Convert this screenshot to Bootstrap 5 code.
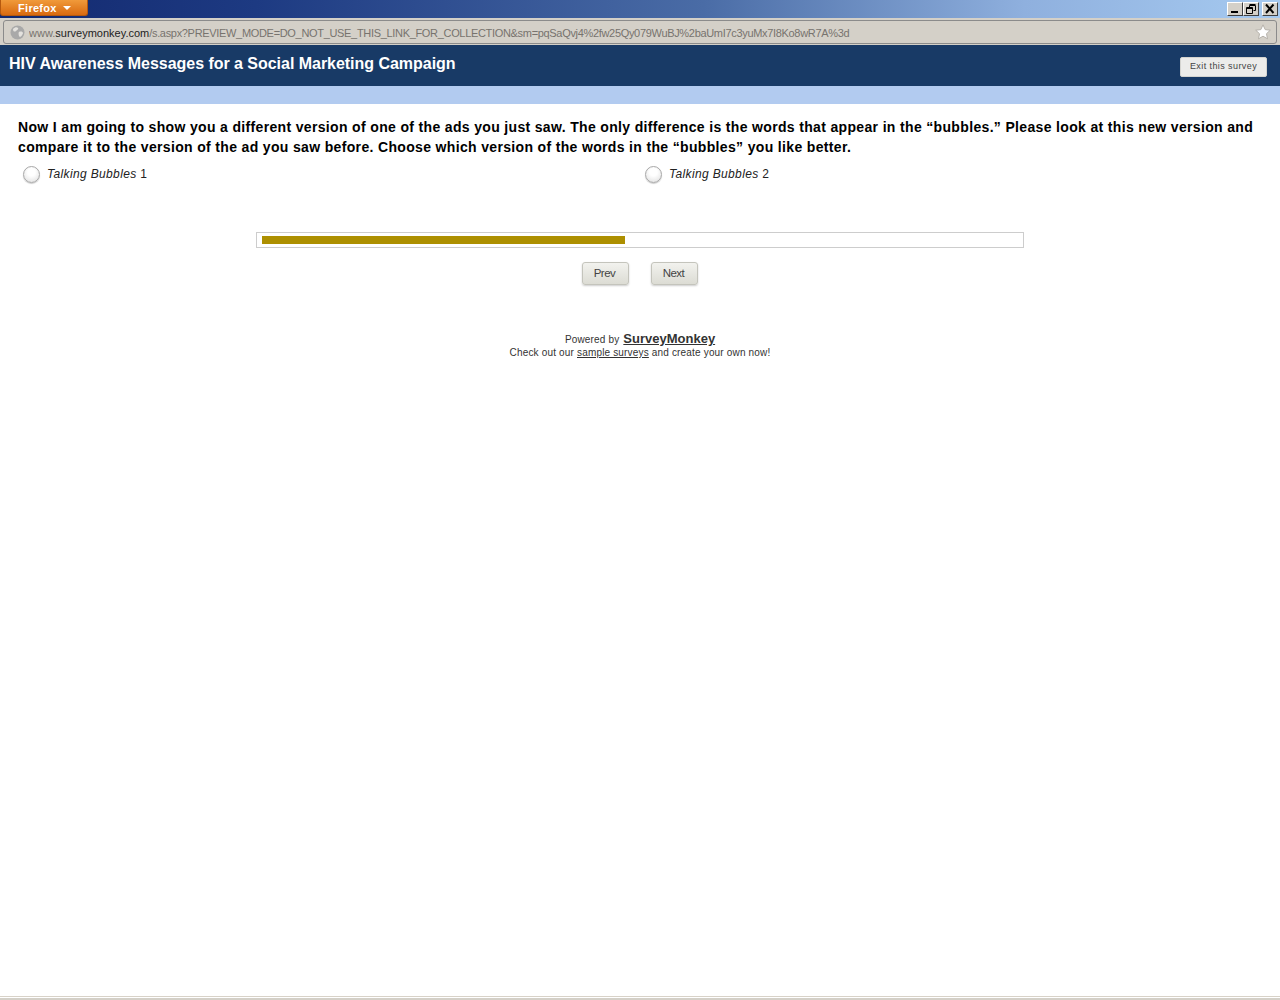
<!DOCTYPE html>
<html lang="en">
<head>
  <meta charset="UTF-8" />
  <title>HIV Awareness Messages for a Social Marketing Campaign</title>
  <meta name="viewport" content="width=device-width, initial-scale=1" />
  <link href="https://cdn.jsdelivr.net/npm/bootstrap@5.3.3/dist/css/bootstrap.min.css" rel="stylesheet" />
  <style>
    html, body { height: 1000px; overflow: hidden; }
    body { font-family: "Liberation Sans", Arial, sans-serif; background: #fff; color: #000; }
    .win-title { height: 18px; background: linear-gradient(90deg, #13296f 0%, #1d3a82 20%, #4a6ca6 55%, #8fb0de 80%, #a6caf0 100%); }
    .ff-btn { width: 88px; height: 16px; background: linear-gradient(#f09a3a, #d96a10); border: 1px solid #b5590f; border-top: 0; border-radius: 0 0 3px 3px; color: #fff; font-size: 11px; font-weight: 700; letter-spacing: .3px; line-height: 16px; padding-left: 17px; gap: 6px; }
    .ff-caret { width: 0; height: 0; border-left: 4px solid transparent; border-right: 4px solid transparent; border-top: 4px solid #fff; }
    .win-btns { gap: 0; padding-top: 2px; padding-right: 2px; }
    .win-btn { width: 16px; height: 14px; background: #d4d0c8; border: 1px solid; border-color: #fff #404040 #404040 #fff; }
    .win-btn svg { display: block; }
    .win-close { margin-left: 3px; }
    .url-wrap { height: 27px; background: #d4d0c8; padding: 2px 3px; }
    .url-box { height: 24px; border: 1px solid #8b8b8b; border-radius: 3px; background: #d4d0c8; font-size: 11px; color: #77736e; padding: 0 5px 0 6px; gap: 4px; }
    .url-box b { font-weight: 400; color: #222; }
    .url-tail { letter-spacing: -.32px; }
    .url-text { flex: 1; white-space: nowrap; overflow: hidden; padding-top: 2px; }
    .survey-head { height: 41px; background: #183a66; padding: 0 13px 0 9px; }
    .survey-title { color: #fff; font-size: 16px; font-weight: 700; margin: 0 0 4px; letter-spacing: -.03px; }
    .exit-btn { font-size: 9px; letter-spacing: 0.42px; color: #444; background: #ececea; border: 1px solid #d4d4d0; border-radius: 2px; width: 87px; height: 20px; line-height: 16px; text-align: center; padding: 0 0 2px; margin-top: 3px; }
    .head-strip { height: 18px; background: #b2cbf0; }
    .q-body { padding: 13px 18px 0; }
    .q-text { font-size: 14px; font-weight: 700; line-height: 20px; letter-spacing: 0.34px; margin: 0 0 7px; }
    .q-opt { font-size: 12px; color: #222; height: 20px; }
    .q-opt label { margin-left: 7px; letter-spacing: .35px; }
    .q-radio { width: 17px; height: 17px; border-radius: 50%; border: 1px solid #a8a8a8; background: radial-gradient(circle at 50% 35%, #fff 30%, #dcdcdc 100%); box-shadow: 0 1px 1px rgba(0,0,0,.2); margin-left: 5px; }
    .q-col { width: 622px; }
    .prog-track { width: 768px; height: 16px; border: 1px solid #cdcdcd; padding: 3px 5px; margin: 48px auto 14px; }
    .prog-fill { height: 8px; background: #ad8f00; }
    .nav-row { gap: 22px; }
    .sm-btn { width: 47px; height: 23px; padding: 0 2px 2px 0; font-size: 11.5px; letter-spacing: -0.5px; line-height: 18px; color: #444; background: linear-gradient(#f2f2ee, #dcdcd4); border: 1px solid #c4c4bc; border-radius: 3px; box-shadow: 0 1px 2px rgba(0,0,0,.2); }
    .powered { margin-top: 47px; text-align: center; font-size: 10px; line-height: 13px; color: #333; letter-spacing: 0.17px; }
    .powered a { color: #333; }
    .sm-link { font-size: 13px; font-weight: 700; letter-spacing: 0; margin-left: 1px; }
    .foot-line { height: 4px; border-top: 1px solid #d8d2c8; background: linear-gradient(#fff 0, #fff 1px, #d4d0c8 1px); }
  </style>
</head>
<body class="d-flex flex-column">
  <div class="win-title d-flex justify-content-between align-items-start">
    <div class="ff-btn d-flex align-items-center">Firefox <span class="ff-caret"></span></div>
    <div class="win-btns d-flex">
      <div class="win-btn"><svg width="14" height="12" viewBox="0 0 14 12"><rect x="3" y="8" width="7" height="2" fill="#000"/></svg></div>
      <div class="win-btn"><svg width="14" height="12" viewBox="0 0 14 12"><path d="M5.500 2.500h6v5h-2M5.500 2.500v2M2.500 4.500h6v6h-6z M2.500 5.500h6 M5.500 1.500h6" fill="none" stroke="#000"/></svg></div>
      <div class="win-btn win-close"><svg width="14" height="12" viewBox="0 0 14 12"><path d="M3 1.500l7.500 8.500M10.500 1.500L3 10" stroke="#000" stroke-width="2" fill="none"/></svg></div>
    </div>
  </div>
  <div class="url-wrap">
    <div class="url-box d-flex align-items-center">
      <svg width="15" height="15" viewBox="0 0 15 15"><circle cx="7.5" cy="7.5" r="7" fill="#a9a9a9"/><path d="M3 4c2-2 4-2 5-1s-1 2-2 3-3 1-3-2zM9 7c2-1 4 0 4 1s-2 4-3 4-2-4-1-5z" fill="#e4e2de"/></svg>
      <div class="url-text">www.<b>surveymonkey.com</b><span class="url-tail">/s.aspx?PREVIEW_MODE=DO_NOT_USE_THIS_LINK_FOR_COLLECTION&amp;sm=pqSaQvj4%2fw25Qy079WuBJ%2baUmI7c3yuMx7I8Ko8wR7A%3d</span></div>
      <svg width="16" height="16" viewBox="0 0 16 16"><path d="M8 .8l2.200 4.800 5.100.6-3.800 3.500 1 5.100L8 12.200l-4.500 2.600 1-5.100L.7 6.200l5.100-.6z" fill="#fff" stroke="#b5b1aa"/></svg>
    </div>
  </div>
  <div class="survey-head d-flex justify-content-between align-items-center">
    <h1 class="survey-title">HIV Awareness Messages for a Social Marketing Campaign</h1>
    <button class="exit-btn" type="button">Exit this survey</button>
  </div>
  <div class="head-strip"></div>
  <main class="flex-grow-1">
    <div class="q-body">
      <p class="q-text">Now I am going to show you a different version of one of the ads you just saw. The only difference is the words that appear in the “bubbles.” Please look at this new version and compare it to the version of the ad you saw before. Choose which version of the words in the “bubbles” you like better.</p>
      <div class="q-opts d-flex">
        <div class="q-col q-opt d-flex align-items-center"><span class="q-radio"></span><label><em>Talking Bubbles</em> 1</label></div>
        <div class="q-col q-opt d-flex align-items-center"><span class="q-radio"></span><label><em>Talking Bubbles</em> 2</label></div>
      </div>
    </div>
    <div class="prog-track"><div class="prog-fill" style="width: 48%"></div></div>
    <div class="nav-row d-flex justify-content-center">
      <button class="sm-btn" type="button">Prev</button>
      <button class="sm-btn" type="button">Next</button>
    </div>
    <div class="powered">
      <div>Powered by <a class="sm-link" href="#">SurveyMonkey</a></div>
      <div>Check out our <a href="#">sample surveys</a> and create your own now!</div>
    </div>
  </main>
  <div class="foot-line"></div>
  <script src="https://cdn.jsdelivr.net/npm/bootstrap@5.3.3/dist/js/bootstrap.bundle.min.js"></script>
</body>
</html>
